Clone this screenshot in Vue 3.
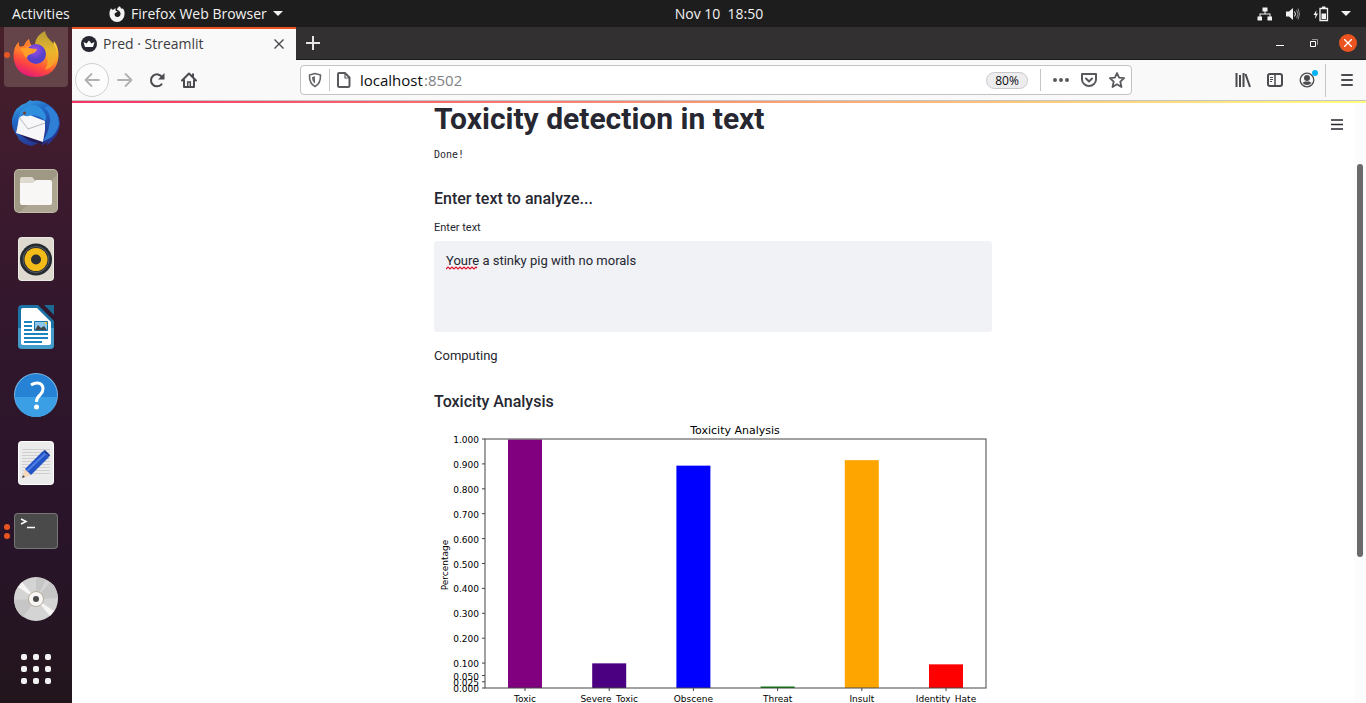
<script setup>
import { ref } from 'vue'

const address = ref('localhost')
const comment = ref('Youre a stinky pig with no morals')

const plot = { left: 51, right: 552, top: 19, bottom: 268 }
const yOf = (v) => plot.bottom - v * (plot.bottom - plot.top)
const ticks = [0, 0.025, 0.05, 0.1, 0.2, 0.3, 0.4, 0.5, 0.6, 0.7, 0.8, 0.9, 1]
const barWidth = 34
const bars = [
  { label: 'Toxic', value: 0.998, color: 'purple' },
  { label: 'Severe_Toxic', value: 0.099, color: 'indigo' },
  { label: 'Obscene', value: 0.893, color: 'blue' },
  { label: 'Threat', value: 0.006, color: 'green' },
  { label: 'Insult', value: 0.915, color: 'orange' },
  { label: 'Identity_Hate', value: 0.095, color: 'red' },
].map((b, i) => ({ ...b, x: 91 + i * 84.2 }))
const gridDots = [0, 1, 2, 3, 4, 5, 6, 7, 8]
</script>

<template>
  <div class="desktop">
    <header class="panel">
      <button class="activities">Activities</button>
      <button class="appmenu">
        <svg width="16" height="16" viewBox="0 0 16 16"><path fill="#f2f2f2" d="M1 4.500 2 2.200l1.200 1.600 1.600-.3L6.500 2v2.500l2 1.200-2.700 1.500C5 9.500 6.500 11 8.300 11c2.200 0 3.500-1.800 3.200-3.800C11.200 5.500 9.500 4.500 8 3.800 8.200 2 9.500.8 11 .2c.3 1.300 1 2 2 2.800l.8-.8C15.300 4 15.800 6 15.500 8.500A7.500 7.500 0 0 1 .5 8.500C.4 7 .5 5.500 1 4.500z"/></svg>
        <span>Firefox Web Browser</span>
        <svg width="10" height="5" viewBox="0 0 10 5"><path fill="#f2f2f2" d="M0 0h10L5 5z"/></svg>
      </button>
      <time class="clock">Nov 10&nbsp; 18:50</time>
      <button class="tray" aria-label="System menu">
        <svg width="16" height="16" viewBox="0 0 16 16"><path fill="#f2f2f2" d="M5.500 1.500h5v4h-2v2h5v3H15v4h-4.500v-4h2v-2h-9v2H5v4H.5v-4h2v-3h5v-2h-2z"/></svg>
        <svg width="16" height="16" viewBox="0 0 16 16"><path fill="#f2f2f2" d="M1 5.500h3L8 2v12l-4-3.500H1z"/><path fill="none" stroke="#f2f2f2" d="M9.500 5.500q2 2.500 0 5"/><path fill="none" stroke="#8d8d8d" d="M11.500 4q3 4 0 8M13 2.500q3 5.500 0 11"/></svg>
        <svg width="16" height="16" viewBox="0 0 16 16"><path fill="#f2f2f2" d="M3.500 4 .5 9h2L2 13l3-5.500H3z"/><path fill="none" stroke="#f2f2f2" stroke-width="1.300" d="M7 2.500h7.500v12H7z"/><path fill="#f2f2f2" d="M9 .5h3.500v2H9zM8.500 7.500H13V13H8.500z"/></svg>
        <svg width="10" height="5" viewBox="0 0 10 5"><path fill="#f2f2f2" d="M0 0h10L5 5z"/></svg>
      </button>
    </header>

    <div class="workspace">
      <nav class="dock" aria-label="Dock">
        <div class="launchers">
          <button class="launcher active" aria-label="Firefox">
            <span class="dots"><i></i></span>
            <svg width="48" height="48" viewBox="0 0 48 48">
              <defs>
                <linearGradient id="fx" x1=".8" y1="0" x2=".3" y2="1"><stop offset="0" stop-color="#ffd83b"/><stop offset=".4" stop-color="#ff9a26"/><stop offset=".7" stop-color="#ff4a3b"/><stop offset="1" stop-color="#e3157d"/></linearGradient>
                <linearGradient id="fy" x1="0" y1="0" x2="0" y2="1"><stop offset="0" stop-color="#b49a36"/><stop offset=".5" stop-color="#e8b62c"/><stop offset="1" stop-color="#ff9a2a"/></linearGradient>
                <radialGradient id="fp" cx=".45" cy=".3"><stop offset="0" stop-color="#9a4ee8"/><stop offset="1" stop-color="#5540c9"/></radialGradient>
              </defs>
              <path fill="url(#fx)" d="M7 11q-1 3 1 5l4-1q1-4 5-7 0 3 2 6l14-1 8 2 1-5q5 7 4.500 15Q45 45 24 46 3 45 1.500 26 1 16 7 11z"/>
              <path fill="url(#fy)" d="M23 13q1-9 10-13 1 6 7 11 6 6 4 16-2 9-11 12 5-8 1-17-4-7-11-9z"/>
              <circle cx="24" cy="23" r="10" fill="url(#fp)"/>
              <path fill="#ff9f29" d="M8 18q4-3 9-1 5 1 8 1-1 4-6 5-4 1-4 4-3-1-4-6z"/>
              <path fill="#ff7b2d" d="M7 11q-1 3 1 5l4-1q1-4 5-7 0 3 2 6-4 1-5 3-3-1-6 1l-3 3q-2-6 2-10z"/>
            </svg>
          </button>
          <button class="launcher" aria-label="Thunderbird">
            <svg width="48" height="48" viewBox="0 0 48 48">
              <defs><linearGradient id="tb" x1="0" y1="0" x2=".5" y2="1"><stop offset="0" stop-color="#41b1ea"/><stop offset=".4" stop-color="#2069c8"/><stop offset="1" stop-color="#26348f"/></linearGradient></defs>
              <path fill="url(#tb)" d="M18 1l2 1q8-2 17 4 10 7 11 18 0 13-14 23l2-4-6 3-2-3-8 4q-11-2-15-9l2 1Q-1 31 0 20 3 7 14 4z"/>
              <path fill="#221b54" d="M4 33l1-4 27 14-2 2-12-3z"/>
              <path fill="#f7f7f9" d="M7 18l8-3 18 7v9l-2 12-27-9q2-8 3-16z"/>
              <path fill="none" stroke="#b7b7bd" d="M7 18l9 12 17-6"/>
              <path fill="#2f8fdc" d="M7 20q0-10 9-13 12-3 17 8 2 4 0 7-5-6-14-6-5 3-9-1z"/>
              <path fill="#2f7fd6" d="M32 8q9 9 5 19-1 7-6 15 13-3 16-17 0-12-10-18z"/>
              <circle cx="12.500" cy="14" r="1.500" fill="#7a3c28"/>
            </svg>
          </button>
          <button class="launcher" aria-label="Files">
            <svg width="44" height="44" viewBox="0 0 44 44"><rect width="44" height="44" rx="5" fill="#c2bcaa"/><rect x="1" y="1" width="42" height="42" rx="4" fill="#9f9884"/><path fill="#aca693" d="M43 6v33q0 4-4 4H6z"/><path fill="#dedacf" d="M6 15v-5q0-2 2-2h9q2 0 3 2l1 2h10v6H6z"/><path fill="#f8f7f5" d="M6 14h13l3-3h14q2 0 2 2v21q0 2-2 2H8q-2 0-2-2z"/></svg>
          </button>
          <button class="launcher" aria-label="Rhythmbox">
            <svg width="44" height="44" viewBox="0 0 44 44"><rect x="4" width="36" height="44" rx="4" fill="#eceae4"/><rect x="5" y="1" width="34" height="42" rx="3" fill="#dedacf"/><circle cx="22" cy="22.500" r="16" fill="#262b32"/><circle cx="22" cy="22.500" r="13" fill="none" stroke="#5b6066"/><circle cx="22" cy="22.500" r="11.500" fill="#f3bc18"/><circle cx="22" cy="22.500" r="5" fill="#2b2f35"/></svg>
          </button>
          <button class="launcher" aria-label="LibreOffice Writer">
            <svg width="44" height="44" viewBox="0 0 44 44"><path fill="#1a72a5" d="M8 0h16l16 16v24q0 4-4 4H8q-4 0-4-4V4q0-4 4-4z"/><path fill="#429bc9" d="M4 23h36v17q0 4-4 4H8q-4 0-4-4z"/><path fill="#1c6a93" d="M30 0h10v10z"/><path fill="#fff" d="M9 3h14l14 14v21q0 2-2 2H9q-2 0-2-2V5q0-2 2-2z"/><path stroke="#1b84c0" stroke-width="2" d="M10 17h8M10 21h8M10 25h8M10 29h24M10 33h24M10 37h18"/><path fill="#8dc8ec" stroke="#1478b0" d="M20.500 16.500h13v9h-13z"/><path fill="#404548" d="M21 25l3-5 3 3 3-2 3 4z"/><path fill="#f3c52d" d="M30 17h3v3z"/></svg>
          </button>
          <button class="launcher" aria-label="Help">
            <svg width="44" height="44" viewBox="0 0 44 44"><circle cx="22" cy="22" r="22" fill="#79b5e4"/><path fill="#2582d4" d="M1 24V22a21 21 0 0 1 42 0v2z"/><path fill="#3a9fe4" d="M1 24a21 20 0 0 0 42 0z"/><path fill="none" stroke="#fff" stroke-width="3" d="M17 12q3-2 6-2 6 0 6 6 0 3-3 6-3.500 3-3.500 7"/><circle cx="22.500" cy="34" r="2.500" fill="#fff"/></svg>
          </button>
          <button class="launcher" aria-label="Text Editor">
            <svg width="44" height="44" viewBox="0 0 44 44"><rect x="4" width="36" height="44" rx="4" fill="#fff"/><rect x="5" y="1" width="34" height="42" rx="3" fill="#ebebeb"/><path stroke="#cfcfcf" d="M8 8.500h28M8 11.500h28M8 14.500h28M8 17.500h28M8 20.500h28M8 23.500h28M8 26.500h28M8 29.500h28M8 32.500h28"/><path fill="#f5d6b8" d="M8 37l3-9 6 6z"/><path fill="#444" d="M8 37l1-3 2 2z"/><path fill="#2254c5" d="M11 28 29 10l6 6-18 18z"/><path stroke="#507ee8" stroke-width="2" d="M13 30l19-18"/><path fill="#163b9c" d="M29 10l2-1 5 5-1 2z"/></svg>
          </button>
          <button class="launcher" aria-label="Terminal">
            <span class="dots"><i></i><i></i></span>
            <svg width="44" height="36" viewBox="0 0 44 36"><rect width="44" height="36" rx="4" fill="#777"/><rect x="1" y="1" width="42" height="34" rx="3" fill="#4a4a4a"/><path fill="none" stroke="#fff" stroke-width="1.500" d="M7 6l5 2.500L7 11M13 14.500h8"/></svg>
          </button>
          <button class="launcher" aria-label="Disc">
            <svg width="46" height="46" viewBox="0 0 46 46"><circle cx="23" cy="23" r="22" fill="#d4d4d4"/><path fill="#c6c6c6" d="M23 23 1 24q1 12 9 17zM23 23l22-1q-1-12-8-16zM23 23V1l10 3z"/><path fill="#f7f6f4" d="M23 23 5 11l4-5zM23 23l18 12-4 5z"/><circle cx="23" cy="23" r="7.500" fill="#f7f6f4" stroke="#b5ae98"/><circle cx="23" cy="23" r="3" fill="#4a4a4a"/></svg>
          </button>
        </div>
        <button class="launcher" aria-label="Show applications">
          <span class="apps"><i v-for="d in gridDots" :key="d"></i></span>
        </button>
      </nav>

      <section class="window">
        <div class="tabstrip">
          <div class="tab">
            <svg width="16" height="16" viewBox="0 0 16 16"><circle cx="8" cy="8" r="8" fill="#262730"/><path fill="#fff" d="M4 11 2.500 6 5.500 7.500 8 4.500l2.500 3 3-1.500L12 11z"/></svg>
            <span class="tabtitle">Pred · Streamlit</span>
            <button aria-label="Close tab"><svg width="10" height="10" viewBox="0 0 10 10"><path stroke="#4a4a4f" stroke-width="1.400" d="M.5.5l9 9M9.500.5l-9 9"/></svg></button>
          </div>
          <button class="newtab" aria-label="New tab"><svg width="14" height="14" viewBox="0 0 14 14"><path stroke="#e6e6e6" stroke-width="2" d="M7 0v14M0 7h14"/></svg></button>
          <div class="controls">
            <button aria-label="Minimize"><svg width="8" height="8" viewBox="0 0 8 8"><path fill="#fff" d="M0 6h8v1H0z"/></svg></button>
            <button aria-label="Restore"><svg width="8" height="8" viewBox="0 0 8 8"><path fill="none" stroke="#fff" d="M.5 2.500h5v5h-5z"/><path fill="none" stroke="#999" d="M2 .5h5.500V6"/></svg></button>
            <button class="close" aria-label="Close"><svg width="8" height="8" viewBox="0 0 8 8"><path stroke="#fff" stroke-width="1.300" d="M0 0l8 8M8 0 0 8"/></svg></button>
          </div>
        </div>

        <div class="toolbar">
          <button class="back" aria-label="Back"><svg width="16" height="16" viewBox="0 0 16 16"><path fill="none" stroke="#b1b1b3" stroke-width="1.800" stroke-linejoin="round" stroke-linecap="round" d="M15 8H1.500M7.500 2l-6 6 6 6"/></svg></button>
          <button aria-label="Forward"><svg width="16" height="16" viewBox="0 0 16 16"><path fill="none" stroke="#b1b1b3" stroke-width="1.800" stroke-linejoin="round" stroke-linecap="round" d="M1 8h13.500M8.500 2l6 6-6 6"/></svg></button>
          <button aria-label="Reload"><svg width="16" height="16" viewBox="0 0 16 16"><path fill="none" stroke="#4a4a4f" stroke-width="2" stroke-linecap="round" d="M12.500 12.300A6 6 0 1 1 13 5"/><path fill="#4a4a4f" d="M15.500 1v6.500H9z"/></svg></button>
          <button aria-label="Home"><svg width="16" height="16" viewBox="0 0 16 16"><path fill="none" stroke="#4a4a4f" stroke-width="2" stroke-linejoin="round" stroke-linecap="round" d="M1 8.500 8 1.500l7 7M3 8v7h10V8"/><path fill="none" stroke="#4a4a4f" stroke-width="1.500" d="M6.700 14v-4h2.600v4"/><path fill="#4a4a4f" d="M11 1.500h2v4l-2-2z"/></svg></button>
          <span class="spacer"></span>
          <div class="urlbar">
            <svg width="16" height="16" viewBox="0 0 16 16"><path fill="none" stroke="#66666a" stroke-width="1.600" stroke-linejoin="round" d="M8 1.500 13.500 3c.2 5-.7 9-5.500 11.500C3.200 12 2.300 8 2.500 3z"/><path fill="#66666a" d="M8 4.200 5 5c0 3 .8 5 3 6.500z"/></svg>
            <span class="rule"></span>
            <svg width="16" height="16" viewBox="0 0 16 16"><path fill="none" stroke="#5a5a5e" stroke-width="2" stroke-linejoin="round" d="M3 1h6l4.500 4.500v8q0 1.500-1.500 1.500H3.500Q2 15 2 13.500V2q0-1 1-1z"/><path fill="none" stroke="#5a5a5e" stroke-width="1.200" d="M9 1v5h5"/></svg>
            <label class="url"><input v-model="address" size="8" aria-label="Address" spellcheck="false"><span>:8502</span></label>
            <button class="zoom">80%</button>
            <span class="rule wide"></span>
            <button aria-label="Page actions"><svg width="16" height="16" viewBox="0 0 16 16"><g fill="#5a5a5e"><circle cx="2" cy="8" r="2"/><circle cx="8" cy="8" r="2"/><circle cx="14" cy="8" r="2"/></g></svg></button>
            <button aria-label="Pocket"><svg width="16" height="16" viewBox="0 0 16 16"><path fill="none" stroke="#5a5a5e" stroke-width="2" stroke-linejoin="round" d="M1 2h14v5.500a7 6.500 0 0 1-14 0z"/><path fill="none" stroke="#5a5a5e" stroke-width="2" stroke-linecap="round" stroke-linejoin="round" d="M5 6.500l3 3 3-3"/></svg></button>
            <button aria-label="Bookmark"><svg width="16" height="16" viewBox="0 0 16 16"><path fill="none" stroke="#5a5a5e" stroke-width="1.800" stroke-linejoin="round" d="M8 1l2.100 4.700 5 .5-3.800 3.500 1.200 5.300L8 12.300 3.500 15l1.200-5.300L.9 6.200l5-.5z"/></svg></button>
          </div>
          <span class="spacer"></span>
          <div class="tools">
            <button aria-label="Library"><svg width="16" height="16" viewBox="0 0 16 16"><path stroke="#4a4a4f" stroke-width="2" d="M1.500 1v14M5 3v12M8.500 1v14M10.500 2l4.500 13"/></svg></button>
            <button aria-label="Sidebars"><svg width="16" height="16" viewBox="0 0 16 16"><rect x="1" y="2" width="14" height="12" rx="2" fill="none" stroke="#4a4a4f" stroke-width="2"/><path stroke="#4a4a4f" stroke-width="1.500" d="M8 2v12"/><path stroke="#4a4a4f" d="M3 5.500h3M3 7.500h3M3 9.500h2"/></svg></button>
            <button class="account" aria-label="Account"><svg width="16" height="16" viewBox="0 0 16 16"><circle cx="8" cy="8" r="6.800" fill="none" stroke="#4a4a4f" stroke-width="1.300"/><circle cx="8" cy="6" r="3" fill="#4a4a4f"/><path fill="#4a4a4f" d="M3.500 11Q5 9.500 6 9.500h4q1 0 2.500 1.500Q10.500 13 8 13t-4.500-2z"/></svg><i></i></button>
          </div>
          <span class="rule tall"></span>
          <button class="menu" aria-label="Menu"><svg width="16" height="16" viewBox="0 0 16 16"><path stroke="#4a4a4f" stroke-width="2" stroke-linecap="round" d="M3 3h10M3 8h10M3 13h10"/></svg></button>
        </div>

        <div class="page">
          <div class="ribbon"></div>
          <div class="viewport">
            <main class="content">
              <h1>Toxicity detection in text</h1>
              <pre class="status">Done!</pre>
              <h3>Enter text to analyze...</h3>
              <label class="fieldlabel" for="comment">Enter text</label>
              <div class="field">
                <textarea id="comment" v-model="comment" spellcheck="false"></textarea>
                <svg class="misspelt" width="33" height="4" viewBox="0 0 33 4"><path fill="none" stroke="#e0142c" stroke-width="1.200" d="M0 3l2-2 2 2 2-2 2 2 2-2 2 2 2-2 2 2 2-2 2 2 2-2 2 2 2-2 2 2 2-2 1 1"/></svg>
              </div>
              <p>Computing</p>
              <h3>Toxicity Analysis</h3>
              <svg class="chart" viewBox="0 0 558 300" role="img" aria-label="Toxicity Analysis chart">
                <text class="charttitle" x="301" y="14" text-anchor="middle">Toxicity Analysis</text>
                <text transform="translate(14 145) rotate(-90)" text-anchor="middle">Percentage</text>
                <rect v-for="b in bars" :key="b.label" :x="b.x - barWidth / 2" :y="yOf(b.value)" :width="barWidth" :height="plot.bottom - yOf(b.value)" :fill="b.color"/>
                <g v-for="t in ticks" :key="t">
                  <path class="axis" :d="`M${plot.left - 3} ${yOf(t)}H${plot.left}`"/>
                  <text :x="plot.left - 6" :y="yOf(t) + 4" text-anchor="end">{{ t.toFixed(3) }}</text>
                </g>
                <g v-for="b in bars" :key="b.label">
                  <path class="axis" :d="`M${b.x} ${plot.bottom}v3`"/>
                  <text :x="b.x" y="282" text-anchor="middle">{{ b.label }}</text>
                </g>
                <rect class="axis" :x="plot.left" :y="plot.top" :width="plot.right - plot.left" :height="plot.bottom - plot.top"/>
              </svg>
            </main>
            <div class="scrollside">
              <button class="pagemenu" aria-label="Page menu"><svg width="12" height="11" viewBox="0 0 12 11"><path stroke="#262730" stroke-width="1.400" d="M0 1h12M0 5.500h12M0 10h12"/></svg></button>
              <div class="scrollbar"><div class="thumb"></div></div>
            </div>
          </div>
        </div>
      </section>
    </div>
  </div>
</template>

<style>
body { margin: 0; overflow: hidden; }
</style>

<style scoped>
* { box-sizing: border-box; }
button { display: flex; align-items: center; justify-content: center; padding: 0; border: 0; background: none; color: inherit; font: inherit; }
svg { display: block; flex: none; }
.desktop { display: flex; flex-direction: column; height: 100vh; overflow: hidden; font-family: "Open Sans", "Noto Sans", sans-serif; font-size: 14px; }
.panel { display: grid; grid-template-columns: 72px 1fr auto 1fr; align-items: center; height: 27px; flex: none; background: #1d1d1d; color: #f2f2f2; }
.activities { justify-content: flex-start; padding-left: 12px; white-space: nowrap; }
.appmenu { justify-content: flex-start; padding-left: 37px; gap: 6px; }
.tray { justify-content: flex-end; padding-right: 15px; gap: 12px; }
.workspace { display: flex; flex: 1; min-height: 0; }
.dock { display: flex; flex-direction: column; justify-content: space-between; align-items: center; width: 72px; flex: none; padding-bottom: 2px; overflow: hidden; background: linear-gradient(#48202a, #3d1a2e 22%, #2f162b 50%, #29142a 75%, #22151c); }
.launchers { display: flex; flex-direction: column; gap: 4px; margin-top: -4px; }
.launcher { position: relative; width: 64px; height: 64px; flex: none; border-radius: 4px; }
.active { background: #644349; }
.dots { position: absolute; left: 0; top: 0; height: 100%; display: flex; flex-direction: column; justify-content: center; gap: 3px; }
.dots i { width: 6px; height: 6px; border-radius: 50%; background: #e95420; }
.apps { display: grid; grid-template-columns: repeat(3, 6px); gap: 6px; }
.apps i { width: 6px; height: 6px; border-radius: 2px; background: #f2f2f2; }
.window { display: flex; flex-direction: column; flex: 1; min-width: 0; background: #fff; }
.tabstrip { display: flex; height: 33px; flex: none; background: #333031; border-bottom: 1px solid #1b1b1b; }
.tab { display: flex; align-items: center; width: 224px; height: 33px; padding: 0 12px 2px 9px; gap: 6px; background: #f9f9fa; border-top: 2px solid #e95420; color: #3c3c40; }
.tabtitle { flex: 1; }
.newtab { width: 34px; }
.controls { display: flex; align-items: center; gap: 26px; margin-left: auto; padding-right: 9px; }
.controls button { width: 8px; height: 18px; }
.controls .close { width: 18px; border-radius: 50%; background: #e95420; margin-left: -5px; }
.toolbar { display: flex; align-items: center; height: 41px; flex: none; padding: 0 8px 0 3px; background: #f9f9fa; border-bottom: 1px solid #c4c4c6; }
.toolbar > button { width: 32px; height: 32px; }
.toolbar > .back { width: 34px; height: 34px; border: 1px solid #cfcfd1; border-radius: 50%; background: #fcfcfc; }
.spacer { flex: 0 1 95px; }
.urlbar { display: flex; align-items: center; flex: 1; height: 30px; padding: 0 6px; background: #fff; border: 1px solid #c2c2c4; border-radius: 4px; }
.rule { width: 1px; height: 22px; margin: 0 6px; flex: none; background: #c6c6c8; }
.rule.wide { margin: 0 12px; }
.rule.tall { height: 33px; margin: 0 10px; }
.url { display: flex; flex: 1; min-width: 0; padding-left: 8px; font-size: 15px; color: #818185; }
.url input { width: 64px; padding: 0; border: 0; outline: 0; background: none; color: #0c0c0d; font: inherit; field-sizing: content; }
.zoom { width: 42px; height: 17px; border: 1px solid #c8c8ca; border-radius: 9px; background: #ededf0; font-size: 12px; color: #0c0c0d; }
.urlbar button + button { margin-left: 12px; }
.tools { display: flex; gap: 16px; margin-left: 8px; }
.account { position: relative; }
.account i { position: absolute; right: -3px; top: -2px; width: 6px; height: 6px; border-radius: 50%; background: #00b3f4; }
.toolbar > .menu { width: 22px; }
.page { display: flex; flex-direction: column; flex: 1; min-height: 0; font-family: Roboto, "Open Sans", sans-serif; color: #262730; }
.ribbon { height: 2px; flex: none; background: linear-gradient(to right, #f63366, #fffd80); }
.viewport { display: grid; grid-template: minmax(0, 1fr) / 1fr 12px; flex: 1; min-height: 0; }
.content { width: 100%; max-width: 558px; margin: 0 auto; min-width: 0; }
h1 { margin: 0; font-size: 30px; font-weight: 700; line-height: 32px; }
.status { margin: 12px 0 0; font: 10px/16px "DejaVu Sans Mono", monospace; }
h3 { margin: 26px 0 0; font-size: 16px; font-weight: 500; line-height: 20px; }
.fieldlabel { display: block; margin-top: 11px; font-size: 11px; line-height: 16px; }
.field { position: relative; margin-top: 5px; }
textarea { display: block; width: 100%; height: 91px; padding: 10px 12px; border: 0; border-radius: 3px; outline: 0; resize: none; background: #f0f2f6; color: #262730; font: 13px/20px Roboto, sans-serif; }
.misspelt { position: absolute; left: 12px; top: 25px; }
p { margin: 14px 0 0; font-size: 13px; line-height: 20px; }
.chart { width: 100%; height: auto; margin-top: 8px; font-family: "DejaVu Sans", sans-serif; font-size: 9px; }
.charttitle { font-size: 11px; }
.axis { fill: none; stroke: #444; stroke-width: 1; }
.scrollside { position: relative; display: flex; justify-content: center; padding-top: 61px; background: #fcfcfc; }
.pagemenu { position: absolute; right: 23px; top: 16px; }
.scrollbar { width: 6px; }
.thumb { height: 73%; border-radius: 3px; background: #6b6b6b; }
</style>
